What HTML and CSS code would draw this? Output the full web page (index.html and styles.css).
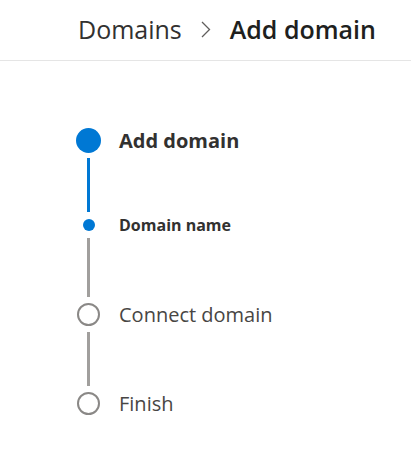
FILE: index.html
```html
<!DOCTYPE html>
<html>
<head>
<meta charset="utf-8">
<link rel="stylesheet" href="styles.css">
</head>
<body>
<header class="header">
  <span class="crumb">Domains</span>
  <span class="chev">
    <svg width="12" height="20" viewBox="0 0 12 20"><path d="M2 3 L9.5 10.5 L2 18" fill="none" stroke="#605e5c" stroke-width="1.3"/></svg>
  </span>
  <span class="current">Add domain</span>
</header>
<ol class="steps">
  <li class="step">
    <span class="marker"><span class="dot-big"></span></span>
    <span class="label label-main">Add domain</span>
  </li>
  <li class="conn conn-blue conn-1"></li>
  <li class="step step-sub">
    <span class="marker"><span class="dot-small"></span></span>
    <span class="label label-sub">Domain name</span>
  </li>
  <li class="conn conn-gray conn-2"></li>
  <li class="step">
    <span class="marker"><span class="ring"></span></span>
    <span class="label label-idle">Connect domain</span>
  </li>
  <li class="conn conn-gray conn-3"></li>
  <li class="step">
    <span class="marker"><span class="ring"></span></span>
    <span class="label label-idle">Finish</span>
  </li>
</ol>
</body>
</html>
```

FILE: styles.css
```css
html, body {
  margin: 0;
  padding: 0;
  background: #ffffff;
}
body {
  font-family: "Open Sans", "Noto Sans", "Liberation Sans", sans-serif;
  color: #323130;
}
.header {
  height: 61px;
  border-bottom: 1px solid #e5e5e5;
  display: flex;
  align-items: center;
  gap: 18px;
  padding-left: 78px;
  padding-bottom: 2px;
  box-sizing: border-box;
  font-size: 25px;
}
.crumb {
  color: #323130;
}
.chev {
  display: flex;
  align-items: center;
}
.current {
  font-weight: 600;
  color: #201f1e;
}
.steps {
  list-style: none;
  margin: 0;
  padding: 67px 0 0 76px;
  display: flex;
  flex-direction: column;
  gap: 5px;
}
.step {
  display: flex;
  align-items: center;
  gap: 18px;
}
.marker {
  width: 25px;
  height: 25px;
  display: flex;
  align-items: center;
  justify-content: center;
  flex: none;
}
.step-sub .marker {
  height: 12px;
}
.dot-big {
  width: 25px;
  height: 25px;
  border-radius: 50%;
  background: #0078d4;
}
.dot-small {
  width: 12px;
  height: 12px;
  border-radius: 50%;
  background: #0078d4;
}
.ring {
  width: 19px;
  height: 19px;
  border-radius: 50%;
  border: 2px solid #8a8886;
}
.conn {
  width: 3px;
  margin-left: 11px;
}
.conn-blue {
  background: #0078d4;
  height: 54px;
}
.conn-gray {
  background: #a19f9d;
}
.conn-2 {
  height: 59px;
}
.conn-3 {
  height: 54px;
}
.label {
  font-size: 20px;
  line-height: 1;
}
.label-main {
  font-weight: 700;
  color: #323130;
}
.label-sub {
  font-size: 16px;
  font-weight: 700;
  color: #323130;
}
.label-idle {
  color: #484644;
}
```
